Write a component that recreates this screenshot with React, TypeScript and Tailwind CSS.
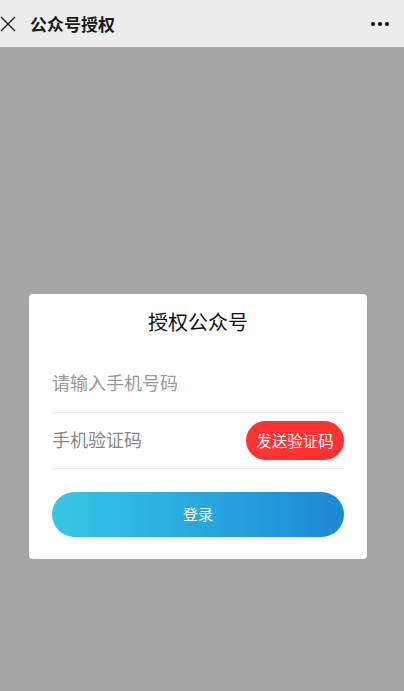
import React from "react";

export default function App() {
  const font = { fontFamily: '"Noto Sans CJK SC", "Noto Sans", sans-serif' };
  return (
    <div className="w-[404px] h-[691px] bg-[#a6a6a7] flex flex-col" style={font}>
      <div className="h-[47px] bg-[#ededed] flex items-center shrink-0">
        <svg width="16" height="16" viewBox="0 0 16 16" className="ml-[0px] mr-[14px]">
          <path d="M1 1 L15 15 M15 1 L1 15" stroke="#1a1a1a" strokeWidth="1.4" fill="none" />
        </svg>
        <span className="text-[17px] font-bold text-[#1a1a1a] leading-none">公众号授权</span>
        <div className="ml-auto mr-[15px] flex gap-[3px]">
          <span className="w-[4px] h-[4px] rounded-full bg-[#111]" />
          <span className="w-[4px] h-[4px] rounded-full bg-[#111]" />
          <span className="w-[4px] h-[4px] rounded-full bg-[#111]" />
        </div>
      </div>
      <div className="flex-1 flex flex-col">
        <div className="mt-[247px] ml-[29px] w-[338px] bg-white rounded-[4px] px-[23px] pt-[14px] pb-[22px]">
          <div className="text-center text-[20px] leading-[28px] text-[#111]">授权公众号</div>
          <div className="mt-[20px] h-[57px] pb-[3px] border-b border-[#ececec] flex items-center">
            <span className="text-[18px] text-[#999]">请输入手机号码</span>
          </div>
          <div className="h-[56px] border-b border-[#ececec] flex items-center justify-between">
            <span className="text-[18px] text-[#888] pb-[2px]">手机验证码</span>
            <button className="h-[39px] w-[98px] rounded-full bg-[#ff3334] text-white text-[15.5px] flex items-center justify-center">
              发送验证码
            </button>
          </div>
          <button className="mt-[23px] w-full h-[45px] rounded-full bg-gradient-to-r from-[#37c8e6] to-[#1d89d3] text-white text-[15px] flex items-center justify-center">
            登录
          </button>
        </div>
      </div>
    </div>
  );
}
